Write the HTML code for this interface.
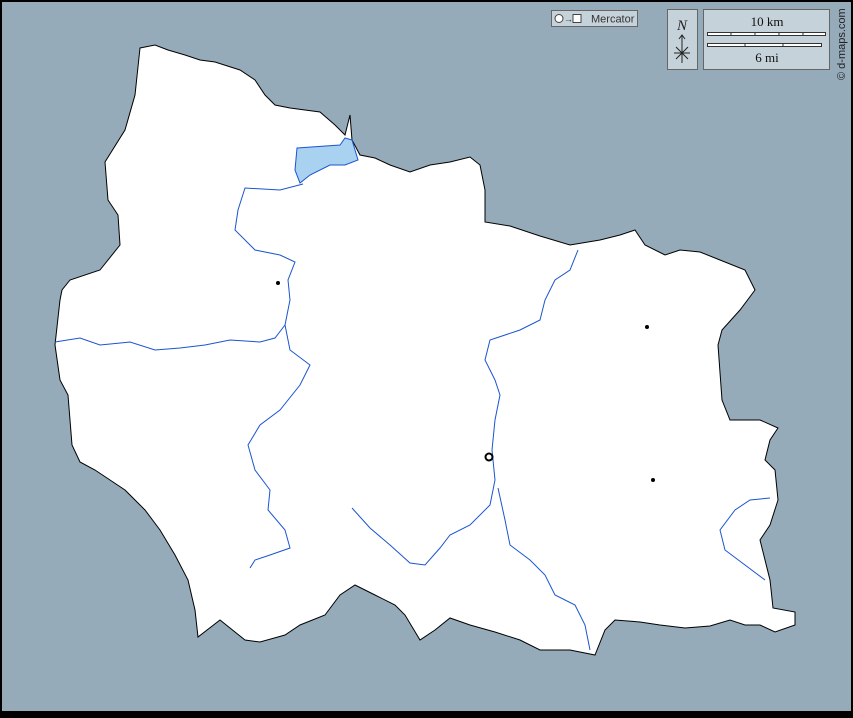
<!DOCTYPE html>
<html><head><meta charset="utf-8"><style>
html,body{margin:0;padding:0;}
body{width:853px;height:713px;overflow:hidden;background:#000;}
.wrap{position:absolute;left:0;top:0;width:853px;height:713px;}
</style></head><body>
<div class="wrap">
<svg width="853" height="713" viewBox="0 0 853 713" xmlns="http://www.w3.org/2000/svg">
<rect x="0" y="0" width="853" height="713" fill="#000"/>
<rect x="2" y="2" width="849" height="709" fill="#95abba"/>
<path d="M140,48 L155,45 L168,50 L185,55 L200,60 L215,62 L240,70 L255,80 L265,95 L275,105 L290,108 L320,112 L335,125 L345,135 L350,115 L352,140 L360,155 L375,158 L390,165 L410,172 L430,165 L450,162 L470,157 L480,165 L485,190 L485,222 L510,226 L540,236 L570,245 L600,240 L620,235 L635,230 L645,245 L665,255 L680,250 L700,252 L720,260 L745,270 L755,290 L740,310 L722,330 L718,345 L722,400 L730,420 L760,420 L778,428 L770,440 L765,460 L775,470 L778,500 L770,525 L760,540 L765,560 L770,580 L773,608 L795,612 L795,625 L775,632 L760,625 L745,625 L730,620 L710,626 L685,628 L660,625 L640,622 L615,620 L605,630 L595,655 L570,650 L540,650 L520,640 L495,632 L470,625 L450,618 L435,630 L420,640 L405,615 L395,605 L375,595 L355,585 L340,595 L325,615 L300,625 L285,635 L260,642 L245,640 L220,620 L198,637 L195,610 L188,580 L175,555 L160,530 L145,510 L125,490 L110,480 L95,470 L80,462 L72,445 L70,420 L68,395 L60,380 L55,345 L60,300 L62,290 L70,280 L100,270 L120,245 L118,215 L108,200 L105,162 L125,130 L135,95 Z" fill="#fff" stroke="#000" stroke-width="1"/>
<path d="M297,148 L340,145 L345,138 L352,140 L358,160 L345,165 L330,165 L310,175 L300,183 L295,170 Z" fill="#a8d2f0" stroke="#1a55d0" stroke-width="1"/>
<g fill="none" stroke="#1a55d0" stroke-width="1">
<path d="M55,342 L80,338 L100,345 L130,342 L155,350 L180,348 L205,345 L230,340 L260,342 L275,338 L285,325"/>
<path d="M303,184 L280,190 L245,188 L238,210 L235,230 L255,250 L280,255 L295,262 L288,280 L290,300 L285,325 L290,350 L310,365 L300,385 L280,410 L260,425 L248,445 L255,470 L270,490 L268,510 L285,530 L290,548 L270,555 L255,560 L250,568"/>
<path d="M578,250 L570,270 L555,280 L545,300 L540,320 L520,330 L490,340 L485,360 L495,380 L500,395 L495,420 L492,450 L495,480 L490,505 L470,525 L450,535 L440,548 L425,565 L410,563 L390,545 L370,528 L352,508"/>
<path d="M498,488 L505,520 L510,545 L530,560 L545,575 L555,595 L575,605 L585,625 L590,650"/>
<path d="M770,498 L750,500 L735,510 L720,530 L725,550 L745,565 L765,580"/>
</g>
<circle cx="278" cy="283" r="2" fill="#000"/>
<circle cx="647" cy="327" r="2" fill="#000"/>
<circle cx="653" cy="480" r="2" fill="#000"/>
<circle cx="489" cy="457" r="3.5" fill="none" stroke="#000" stroke-width="2"/>
<rect x="551.5" y="10.5" width="86" height="16" fill="#c6d2da" stroke="#666"/>
<circle cx="559" cy="18.5" r="4" fill="#fff" stroke="#444"/>
<text x="564" y="22" font-family="Liberation Sans,sans-serif" font-size="9" fill="#333">→</text>
<rect x="573" y="14.5" width="8" height="8" fill="#fff" stroke="#444"/>
<text x="591" y="22.5" font-family="Liberation Sans,sans-serif" font-size="11" fill="#333">Mercator</text>
<rect x="667.5" y="9.5" width="30" height="60" fill="#c6d2da" stroke="#666"/>
<text x="682" y="30" text-anchor="middle" font-family="Liberation Serif,serif" font-style="italic" font-size="15" fill="#222">N</text>
<path d="M682,35 L682,63 M674,53 L690,53 M676,47 L688,59 M688,47 L676,59 M679,39 L682,35 L685,39" stroke="#222" stroke-width="1" fill="none"/>
<rect x="703.5" y="9.5" width="126" height="60" fill="#c6d2da" stroke="#666"/>
<text x="767" y="26" text-anchor="middle" font-family="Liberation Serif,serif" font-size="13" fill="#111">10 km</text>
<rect x="707.5" y="32.5" width="118" height="3" fill="#fff" stroke="#333"/>
<path d="M731,32 V36 M755,32 V36 M779,32 V36 M803,32 V36" stroke="#333"/>
<rect x="707.5" y="43.5" width="114" height="3" fill="#fff" stroke="#333"/>
<path d="M745,43 V47 M783,43 V47" stroke="#333"/>
<text x="767" y="62" text-anchor="middle" font-family="Liberation Serif,serif" font-size="13" fill="#111">6 mi</text>
<text transform="translate(845,80) rotate(-90)" font-family="Liberation Sans,sans-serif" font-size="11" fill="#222">© d-maps.com</text>
</svg>
</div>
</body></html>
